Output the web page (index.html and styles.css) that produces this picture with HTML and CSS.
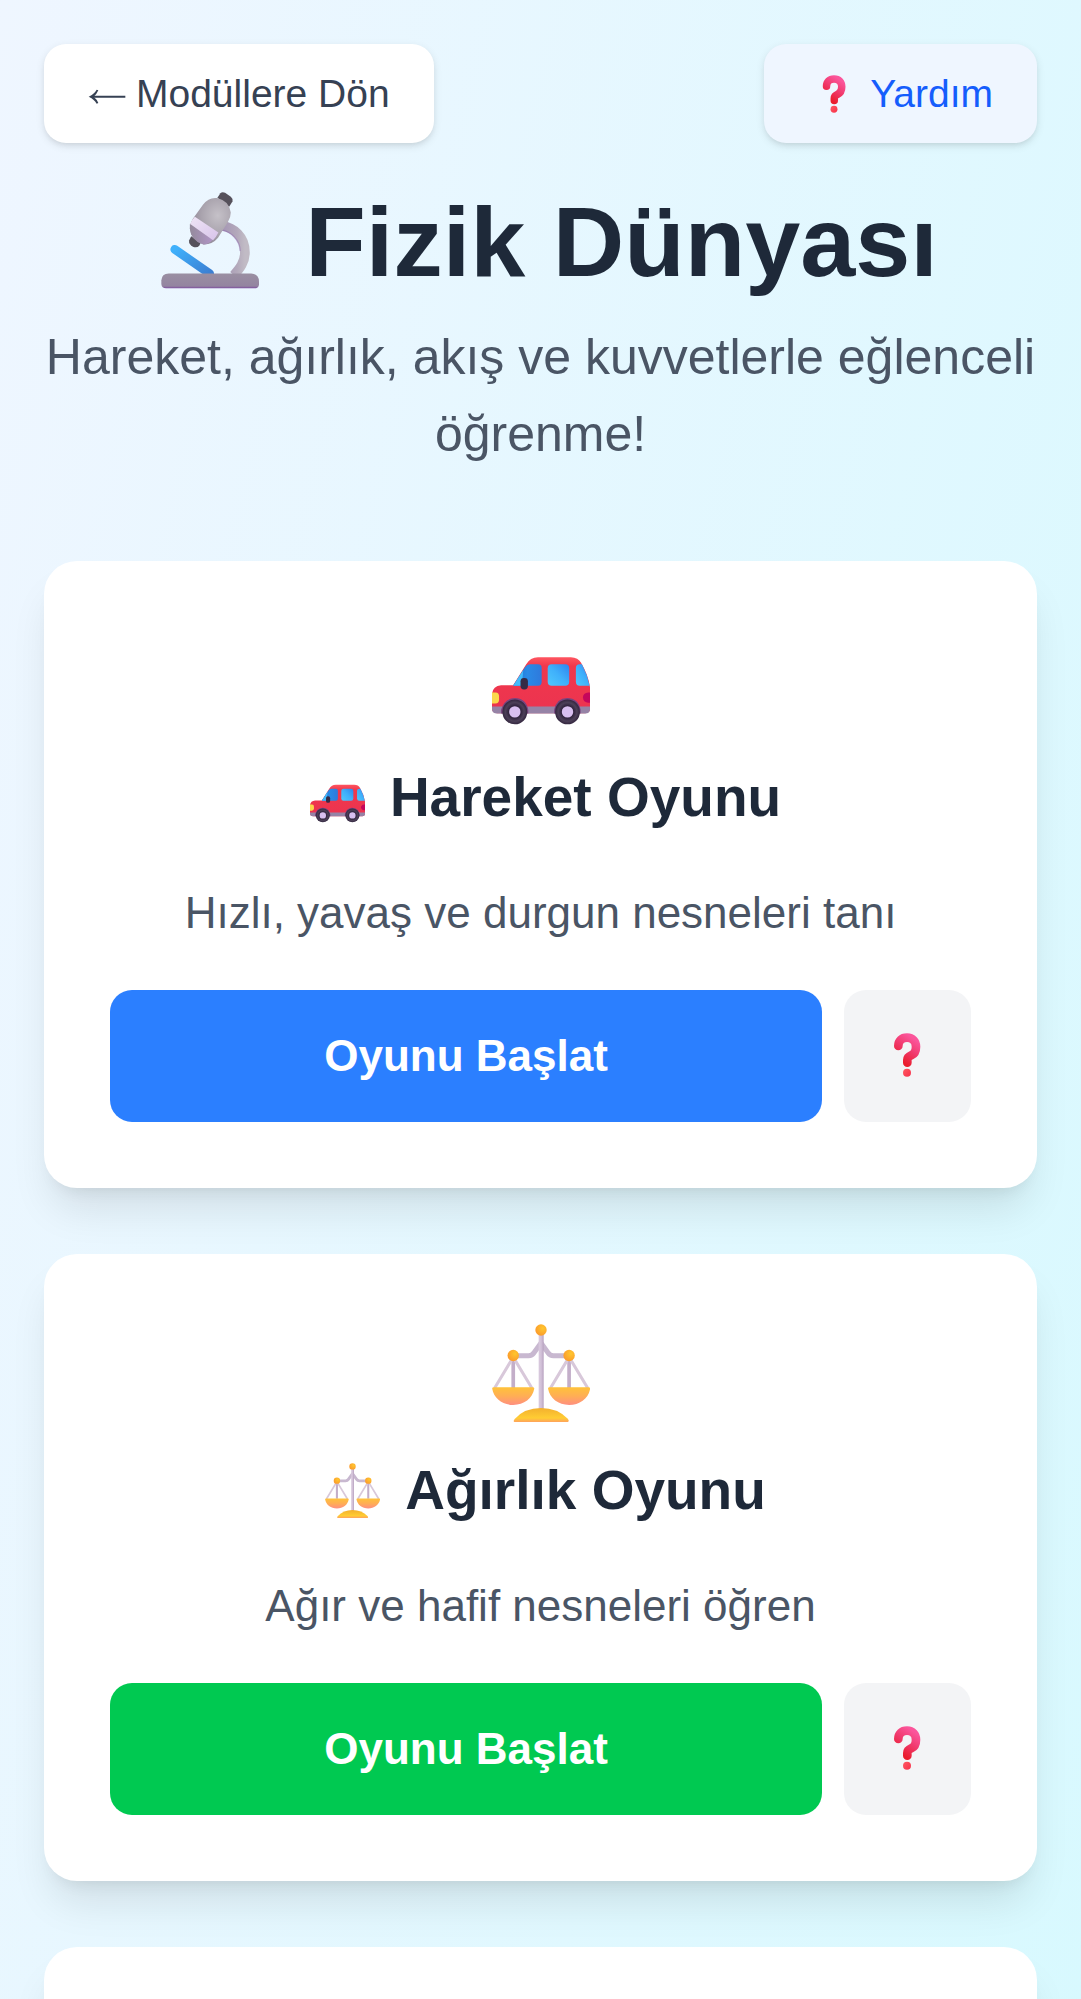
FILE: index.html
```html
<!DOCTYPE html>
<html lang="tr">
<head>
<meta charset="utf-8">
<meta name="viewport" content="width=device-width, initial-scale=1">
<title>Fizik Dünyası</title>
<link rel="stylesheet" href="styles.css">
</head>
<body>
<svg class="sprite" aria-hidden="true">
  <defs>
    <linearGradient id="q-body" x1=".8" y1="0" x2=".3" y2="1"><stop offset="0" stop-color="#fb559b"/><stop offset=".5" stop-color="#f0386a"/><stop offset="1" stop-color="#ea1c2c"/></linearGradient>
    <linearGradient id="q-dot" x1="0" y1="0" x2="1" y2="1"><stop offset="0" stop-color="#ff5a63"/><stop offset="1" stop-color="#f7304a"/></linearGradient>
    <radialGradient id="m-tube" cx=".68" cy=".38" r=".65"><stop offset="0" stop-color="#c5c1c8"/><stop offset=".6" stop-color="#aaa4ae"/><stop offset="1" stop-color="#928a99"/></radialGradient>
    <linearGradient id="m-base" x1="0" y1="0" x2="0" y2="1"><stop offset="0" stop-color="#9a8fa2"/><stop offset=".85" stop-color="#9484a0"/><stop offset="1" stop-color="#7b4b9e"/></linearGradient>
    <linearGradient id="m-arm" x1="0" y1="0" x2="1" y2="0"><stop offset="0" stop-color="#a596b4"/><stop offset=".65" stop-color="#b3a9bb"/><stop offset="1" stop-color="#c1bbc5"/></linearGradient>
    <linearGradient id="m-stage" x1="0" y1="0" x2="1" y2="1"><stop offset="0" stop-color="#3fb0fb"/><stop offset="1" stop-color="#3c7fd2"/></linearGradient>
    <linearGradient id="m-ring" x1="0" y1="0" x2="1" y2="1"><stop offset="0" stop-color="#efe5f6"/><stop offset="1" stop-color="#d8c3ea"/></linearGradient>
    <linearGradient id="m-nose" x1="0" y1="0" x2="1" y2="0"><stop offset="0" stop-color="#948a9c"/><stop offset="1" stop-color="#b195c6"/></linearGradient>
    <linearGradient id="c-body" x1="0" y1="0" x2="0" y2="1"><stop offset="0" stop-color="#ff5560"/><stop offset=".16" stop-color="#f0384c"/><stop offset="1" stop-color="#ec3350"/></linearGradient>
    <linearGradient id="c-glass" x1="0" y1="0" x2="1" y2="0"><stop offset="0" stop-color="#1b70d4"/><stop offset=".5" stop-color="#2a8ae6"/><stop offset="1" stop-color="#2f79dc"/></linearGradient>
    <linearGradient id="c-glass-light" x1="0" y1="1" x2="1" y2="0"><stop offset="0" stop-color="#50c8fc"/><stop offset=".5" stop-color="#3fb0fb"/><stop offset="1" stop-color="#2e83f0"/></linearGradient>
    <radialGradient id="c-tyre"><stop offset=".5" stop-color="#32253f"/><stop offset=".75" stop-color="#4c4058"/><stop offset="1" stop-color="#33263f"/></radialGradient>
    <linearGradient id="s-post" x1="0" y1="0" x2="1" y2="0"><stop offset="0" stop-color="#d9cade"/><stop offset=".5" stop-color="#d2c1d8"/><stop offset="1" stop-color="#b8a2c0"/></linearGradient>
    <linearGradient id="s-pan" x1="0" y1="0" x2="0" y2="1"><stop offset="0" stop-color="#ffc23a"/><stop offset=".5" stop-color="#ffae55"/><stop offset="1" stop-color="#ff8f80"/></linearGradient>
    <linearGradient id="s-foot" x1="0" y1="0" x2="0" y2="1"><stop offset="0" stop-color="#f3b02e"/><stop offset=".7" stop-color="#ffcd33"/><stop offset="1" stop-color="#ff9f60"/></linearGradient>
    <radialGradient id="s-ball" cx=".65" cy=".35" r=".7"><stop offset="0" stop-color="#ffc62e"/><stop offset="1" stop-color="#fb9a2c"/></radialGradient>
  </defs>
  <symbol id="arrow-left" viewBox="176 142 114 114">
    <path d="M184 201H288" fill="none" stroke="currentColor" stroke-width="6"/>
    <path d="M178 201Q194 194 202 180L207 182Q202 194 193 201Q202 208 207 220L202 222Q194 208 178 201Z" fill="currentColor"/>
  </symbol>
  <symbol id="question" viewBox="164 157 132 132">
    <path d="M204 196C204 180 214 171 230 171C247 171 257 182 257 198C257 212 252 220 243 224C234 228 231 231 231 238V246" fill="none" stroke="url(#q-body)" stroke-width="26" stroke-linecap="round" stroke-linejoin="round"/>
    <circle cx="230" cy="276" r="12" fill="url(#q-dot)"/>
  </symbol>
  <symbol id="microscope" viewBox="35 33 292 292">
    <path d="M218 137C250 142 285 168 285 216C285 245 270 264 252 284" fill="none" stroke="url(#m-arm)" stroke-width="29"/>
    <path d="M213 148C242 153 270 178 271 212" fill="none" stroke="#8d68ad" stroke-opacity=".45" stroke-width="4"/>
    <path d="M76 207L180 279" stroke="url(#m-stage)" stroke-width="26" stroke-linecap="round"/>
    <path d="M36 310V300Q37 279 58 279H304Q326 280 327 302V312Q326 323 312 323H50Q37 323 36 310Z" fill="url(#m-base)"/>
    <path d="M125 168L153 188L149 196Q142 204 130 199Q116 192 119 180Z" fill="#56515b"/>
    <path d="M203 53L212 40Q217 34 226 38L243 50Q251 57 248 64L238 80Z" fill="#56515b"/>
    <path d="M121 145Q121 130 130 116L160 74Q177 51 202 54Q238 62 243 97Q243 112 234 126L205 172Q188 193 160 192Q124 180 121 145Z" fill="url(#m-tube)"/>
    <path d="M121 131L189 178Q176 193 160 192Q124 181 121 145Z" fill="url(#m-nose)"/>
    <path d="M122 131Q126 120 136 110L206 157Q200 170 190 180Z" fill="url(#m-ring)"/>
  </symbol>
  <symbol id="car" viewBox="35 -27 292 292">
    <path d="M35 205V160Q38 137 62 135H98L137 72Q149 51 172 51H270Q292 52 300 67Q322 105 327 140V205Q327 218 313 218H50Q36 218 35 205Z" fill="url(#c-body)"/>
    <path d="M35 198H327V207Q326 219 313 219H50Q36 219 35 207Z" fill="#9683a6"/>
    <path d="M62 219V208Q72 173 103 173Q136 173 143 208V219ZM220 219V208Q228 173 259 173Q292 173 299 208V219Z" fill="#77457f"/>
    <path d="M98 136L134 80Q139 72 149 72H172Q183 72 183 83V125Q183 136 172 136Z" fill="url(#c-glass)"/>
    <path d="M98 136L128 89L124 136Z" fill="#43bcfb"/>
    <rect x="201" y="72" width="64" height="64" rx="12" fill="url(#c-glass-light)"/>
    <path d="M285 83Q285 72 296 72H303Q320 104 326 136H296Q285 136 285 124Z" fill="url(#c-glass-light)"/>
    <rect x="120" y="113" width="22" height="34" rx="10" fill="#352a45"/>
    <path d="M35 156H46Q56 157 56 167V178Q56 189 45 189H35Z" fill="#fbd84b"/>
    <path d="M327 156H322Q306 158 306 171Q307 185 322 187H327Z" fill="#c5065b"/>
    <circle cx="103" cy="214" r="37" fill="url(#c-tyre)"/>
    <circle cx="103" cy="214" r="17" fill="#d8bff0"/>
    <circle cx="260" cy="214" r="37" fill="url(#c-tyre)"/>
    <circle cx="260" cy="214" r="17" fill="#d8bff0"/>
  </symbol>
  <symbol id="scales" viewBox="35 27 292 293">
    <path d="M98 128V218M265 128V218" stroke="#c3aec9" stroke-width="11"/>
    <path d="M98 126L42 219M98 126L154 219M265 126L209 219M265 126L321 219" stroke="#d8c8da" stroke-width="9"/>
    <path d="M98 122H144Q154 122 160 113L181 84L202 113Q208 122 218 122H265" fill="none" stroke="#c8b8d0" stroke-width="15" stroke-linejoin="round"/>
    <rect x="174" y="50" width="15" height="235" fill="url(#s-post)"/>
    <path d="M35 220Q35 216 40 216H156Q161 216 161 220C156 250 130 269 98 269C66 269 40 250 35 220ZM202 220Q202 216 207 216H323Q328 216 328 220C323 250 297 269 265 269C233 269 207 250 202 220Z" fill="url(#s-pan)"/>
    <path d="M103 310Q132 278 181 278Q230 278 261 310Q269 320 256 321H107Q94 320 103 310Z" fill="url(#s-foot)"/>
    <circle cx="181" cy="45" r="17" fill="url(#s-ball)"/>
    <circle cx="98" cy="121" r="17" fill="url(#s-ball)"/>
    <circle cx="265" cy="121" r="17" fill="url(#s-ball)"/>
  </symbol>
</svg>

<div class="page">
  <nav class="topbar">
    <button class="nav-button" type="button"><svg class="arrow" aria-hidden="true"><use href="#arrow-left"/></svg>Modüllere Dön</button>
    <button class="nav-button nav-button-help" type="button"><svg class="emoji emoji-sm" aria-hidden="true"><use href="#question"/></svg>Yardım</button>
  </nav>

  <header class="intro">
    <h1 class="title"><svg class="emoji emoji-xl" aria-hidden="true"><use href="#microscope"/></svg>Fizik Dünyası</h1>
    <p class="subtitle">Hareket, ağırlık, akış ve kuvvetlerle eğlenceli öğrenme!</p>
  </header>

  <main class="games">
    <article class="card">
      <div class="card-icon"><svg class="emoji-hero" aria-hidden="true"><use href="#car"/></svg></div>
      <h2 class="card-title"><svg class="emoji emoji-lg" aria-hidden="true"><use href="#car"/></svg>Hareket Oyunu</h2>
      <p class="card-text">Hızlı, yavaş ve durgun nesneleri tanı</p>
      <div class="actions">
        <button class="start start-blue" type="button">Oyunu Başlat</button>
        <button class="hint" type="button" aria-label="Yardım"><svg class="emoji-md" aria-hidden="true"><use href="#question"/></svg></button>
      </div>
    </article>

    <article class="card">
      <div class="card-icon"><svg class="emoji-hero" aria-hidden="true"><use href="#scales"/></svg></div>
      <h2 class="card-title"><svg class="emoji emoji-lg" aria-hidden="true"><use href="#scales"/></svg>Ağırlık Oyunu</h2>
      <p class="card-text">Ağır ve hafif nesneleri öğren</p>
      <div class="actions">
        <button class="start start-green" type="button">Oyunu Başlat</button>
        <button class="hint" type="button" aria-label="Yardım"><svg class="emoji-md" aria-hidden="true"><use href="#question"/></svg></button>
      </div>
    </article>

    <article class="card card-next"></article>
  </main>
</div>
</body>
</html>
```

FILE: styles.css
```css
* {
  box-sizing: border-box;
}

body,
h1,
h2,
p {
  margin: 0;
}

body {
  font-family: "Liberation Sans", Arial, sans-serif;
  color: #1e2939;
}

button {
  border: 0;
  font-family: inherit;
  cursor: pointer;
}

.sprite {
  position: absolute;
  width: 0;
  height: 0;
}

.page {
  height: 100vh;
  overflow: hidden;
  padding: 44px;
  background: linear-gradient(to bottom right in oklab, #eff6ff, #cefafe) 0 0 / 100% 4700px no-repeat;
}

.topbar {
  display: flex;
  justify-content: space-between;
  margin-bottom: 44px;
}

.nav-button {
  display: flex;
  align-items: center;
  padding: 22px 44px;
  border-radius: 22px;
  background: #fff;
  color: #364153;
  font-size: 39px;
  line-height: 55px;
  box-shadow: 0 3px 8px rgba(0, 0, 0, 0.1), 0 3px 6px -3px rgba(0, 0, 0, 0.1);
}

.nav-button-help {
  background: #eff6ff;
  color: #155dfc;
}

.arrow {
  flex: none;
  width: 38px;
  height: 38px;
  margin: 4px 10px 0 0;
}

.emoji {
  flex: none;
}

.emoji-sm {
  width: 38px;
  height: 38px;
  margin: 0 17px 0 7px;
}

.emoji-md {
  display: block;
  width: 44px;
  height: 44px;
}

.emoji-lg {
  width: 55px;
  height: 55px;
  margin: 0 25px 0 10px;
}

.emoji-xl {
  width: 98px;
  height: 98px;
  margin: 0 46px 4px 18px;
}

.emoji-hero {
  width: 98px;
  height: 98px;
}

.intro {
  margin-bottom: 88px;
  text-align: center;
}

.title {
  display: flex;
  align-items: center;
  justify-content: center;
  height: 110px;
  margin-bottom: 22px;
  font-size: 99px;
  line-height: 110px;
}

.subtitle {
  color: #4a5565;
  font-size: 50px;
  line-height: 77px;
}

.games {
  display: grid;
  gap: 66px;
}

.card {
  padding: 66px;
  border-radius: 33px;
  background: #fff;
  text-align: center;
  box-shadow: 0 28px 41px -8px rgba(0, 0, 0, 0.1), 0 11px 17px -11px rgba(0, 0, 0, 0.1);
}

.card-next {
  min-height: 627px;
}

.card-icon {
  display: flex;
  align-items: center;
  justify-content: center;
  height: 110px;
  margin-bottom: 22px;
  padding-bottom: 4px;
}

.card-title {
  display: flex;
  align-items: center;
  justify-content: center;
  margin-bottom: 44px;
  font-size: 55px;
  line-height: 77px;
}

.card-text {
  margin-bottom: 44px;
  color: #4a5565;
  font-size: 44px;
  line-height: 66px;
}

.actions {
  display: flex;
  gap: 22px;
}

.start {
  flex: 1;
  padding: 33px;
  border-radius: 22px;
  color: #fff;
  font-size: 44px;
  font-weight: 700;
  line-height: 66px;
}

.start-blue {
  background: #2b7fff;
}

.start-green {
  background: #00c951;
}

.hint {
  display: flex;
  align-items: center;
  padding: 32px 42px 34px 41px;
  border-radius: 22px;
  background: #f3f4f6;
}
```
